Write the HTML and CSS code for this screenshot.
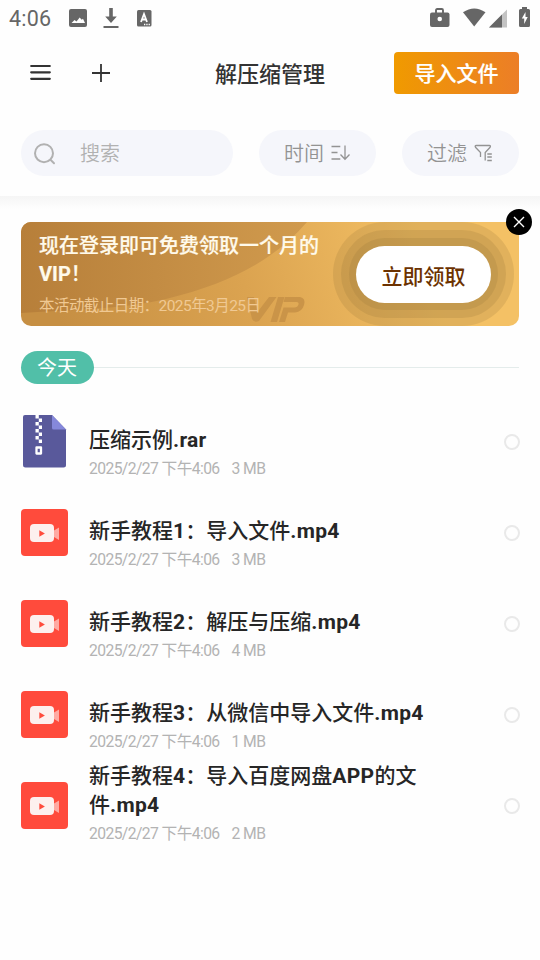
FILE: index.html
```html
<!DOCTYPE html>
<html lang="zh-CN">
<head>
<meta charset="utf-8">
<title>解压缩管理</title>
<link rel="stylesheet" href="styles.css">
</head>
<body>
<svg width="0" height="0" class="defs">
  <symbol id="video" viewBox="0 0 47 47">
    <rect width="47" height="47" rx="4" fill="#ff4b3c"/>
    <path d="M33 21.500l5-3v12.500l-5-3z" fill="#ffa9a2"/>
    <rect x="9" y="15" width="24" height="18" rx="4" fill="#fdf0ee"/>
    <path d="M18.300 21.200v6.600l5.600-3.300z" fill="#ff4b3c"/>
  </symbol>
</svg>
<div class="status">
  <span class="clock">4:06</span>
  <svg class="s-pic" width="18" height="18" viewBox="0 0 18 18"><rect width="18" height="18" rx="2" fill="#666"/><path d="M2.500 14l3-3 2 1.500 3.200-4 2 2.200 1.300-1 2 4.300z" fill="#fff"/></svg>
  <svg class="s-down" width="16" height="22" viewBox="0 0 16 22"><path d="M6.200 1h3.600v8.500h4L8 16 2.200 9.500h4zM.5 19h15v2H.5z" fill="#666"/></svg>
  <svg class="s-app" width="16" height="17" viewBox="0 0 16 17"><rect x="1" width="14.500" height="16.500" rx="1.500" fill="#666"/><path d="M5 12l3-8 3 8M6 9.500h4" fill="none" stroke="#fff" stroke-width="1.800"/><path d="M8 14.500h6" stroke="#fff" stroke-width="1.300" stroke-dasharray="1.300 1"/></svg>
  <span class="spacer"></span>
  <svg class="s-case" width="20" height="20" viewBox="0 0 20 20"><path d="M6 5V2.200Q6 1 7.200 1h4.600Q13 1 13 2.200V5" fill="none" stroke="#666" stroke-width="1.900"/><rect y="4.500" width="19.500" height="14.500" rx="2" fill="#666"/><circle cx="9.750" cy="11" r="2.300" fill="#fff"/></svg>
  <svg class="s-wifi" width="23" height="19" viewBox="0 0 23 19"><path d="M0 4.300Q11.200-3.500 22.500 4.300L11.200 18.500z" fill="#666"/></svg>
  <svg class="s-cell" width="18" height="19" viewBox="0 0 18 19"><path d="M0 18.500L18 .5v18z" fill="#c3c3c3"/><path d="M0 18.500L13 5.500v13z" fill="#666"/></svg>
  <svg class="s-batt" width="11" height="20" viewBox="0 0 11 20"><path d="M3 0h5v2h1.500q1.500 0 1.500 1.500v15q0 1.500-1.500 1.500h-8Q0 20 0 18.500v-15Q0 2 1.500 2H3z" fill="#666"/><path d="M6.500 5L2.800 11.500h2.400V17l3.500-7H6.500z" fill="#fff"/></svg>
</div>
<header class="bar">
  <svg class="menu" width="21" height="17" viewBox="0 0 21 17"><path d="M1.200 2h18.600M1.200 8.300h18.600M1.200 14.800h18.600" stroke="#333" stroke-width="2.200" stroke-linecap="round"/></svg>
  <svg class="plus" width="18" height="18" viewBox="0 0 18 18"><path d="M0 9h18M9 0v18" stroke="#333" stroke-width="1.800"/></svg>
  <h1>解压缩管理</h1>
  <button class="import">导入文件</button>
</header>
<div class="filters">
  <div class="pill search">
    <svg width="23" height="23" viewBox="0 0 23 23" fill="none" stroke="#b1b1b1" stroke-width="2" stroke-linecap="round"><circle cx="11" cy="11.200" r="9"/><path d="M18 18.200l3 3"/></svg>
    <span>搜索</span>
  </div>
  <div class="pill">
    <span>时间</span>
    <svg width="20" height="18" viewBox="0 0 20 18" fill="none" stroke="#939393" stroke-width="1.300"><path d="M.5 2.500h8.800M.5 8.500h6M.5 15h8.800M14 1.500V15M9.500 10.500L14 15.300l4.500-4.800"/></svg>
  </div>
  <div class="pill">
    <span>过滤</span>
    <svg width="20" height="18" viewBox="0 0 20 18" fill="none" stroke="#939393" stroke-width="1.300"><path d="M6.500 13V8.500L1.500 3.300q-1-1.800.8-1.800h13q1.800 0 .8 1.800L11.200 8.500V16.500M13.300 10h4.500M13.300 13h4.500M13.300 16.500h4.500"/></svg>
  </div>
</div>
<main>
  <section class="banner">
    <svg class="art" width="498" height="104" viewBox="0 0 498 104">
      <defs>
        <linearGradient id="gold" gradientUnits="userSpaceOnUse" x1="40" y1="104" x2="400" y2="0"><stop offset="0" stop-color="#c68f43"/><stop offset=".5" stop-color="#dba350"/><stop offset="1" stop-color="#f4c165"/></linearGradient>
        <linearGradient id="hill" gradientUnits="userSpaceOnUse" x1="0" y1="0" x2="280" y2="0"><stop offset="0" stop-color="#b77f3a"/><stop offset="1" stop-color="#d09a4d"/></linearGradient>
      </defs>
      <rect width="498" height="104" fill="url(#gold)"/>
      <path d="M0 0h286C253 38 210 61 145 77 96 88 45 88 0 91z" fill="url(#hill)"/>
      <g fill="#ca9448"><path d="M226 75h7l3.500 15L248 75h7.500L238 99q-5 2-7-2z"/><path d="M257 75h6.500l-7.500 25h-6.500z"/><path d="M264 75h15q6 1 4 8-2 7-9 7.500h-7L264 100h-6l4.500-14.500h11q3 0 4-3 .5-2.500-2-2.500h-13z"/></g>
      <g fill="#8e7037" fill-opacity=".19"><rect x="312" y="0" width="181" height="104" rx="52"/><rect x="320" y="8" width="165" height="88" rx="44"/><rect x="328" y="16" width="149" height="72" rx="36"/></g>
    </svg>
    <div class="offer">
      <h2>现在登录即可免费领取一个月的<b>VIP</b>！</h2>
      <p>本活动截止日期：2025年3月25日</p>
    </div>
    <button class="claim">立即领取</button>
    <svg class="close" width="26" height="26" viewBox="0 0 26 26"><circle cx="13" cy="13" r="13"/><path d="M8 8l10 10M18 8L8 18" stroke="#fff" stroke-width="1.400"/></svg>
  </section>
  <div class="day"><span>今天</span></div>
  <ul class="files">
    <li>
      <svg width="47" height="53" viewBox="0 0 47 53"><path d="M4 0h27l14 14.500V50q0 2.500-2.500 2.500H4.500Q2 52.500 2 50V2q0-2 2-2z" fill="#59599b"/><path d="M31 0l14 14.500H32.500Q31 14.500 31 13z" fill="#8588db"/><path d="M14.500 0h3.300v3.500h-3.300zM17.800 3.500H21V7h-3.200zM14.500 7h3.300v3.500h-3.300zM17.800 10.500H21V14h-3.200zM14.500 14h3.300v3.500h-3.300zM17.800 17.500H21V21h-3.200zM14.500 21h3.300v3.500h-3.300zM17.800 24.500H21V28h-3.200z" fill="#fff"/><rect x="15.500" y="32.500" width="4.500" height="6" fill="none" stroke="#fff" stroke-width="2.300" stroke-linejoin="round"/></svg>
      <div class="info"><h3>压缩示例<b>.rar</b></h3><p><span>2025/2/27 下午4:06</span><span>3 MB</span></p></div><i></i>
    </li>
    <li><svg width="47" height="47"><use href="#video"/></svg><div class="info"><h3>新手教程<b>1</b>：导入文件<b>.mp4</b></h3><p><span>2025/2/27 下午4:06</span><span>3 MB</span></p></div><i></i></li>
    <li><svg width="47" height="47"><use href="#video"/></svg><div class="info"><h3>新手教程<b>2</b>：解压与压缩<b>.mp4</b></h3><p><span>2025/2/27 下午4:06</span><span>4 MB</span></p></div><i></i></li>
    <li><svg width="47" height="47"><use href="#video"/></svg><div class="info"><h3>新手教程<b>3</b>：从微信中导入文件<b>.mp4</b></h3><p><span>2025/2/27 下午4:06</span><span>1 MB</span></p></div><i></i></li>
    <li><svg width="47" height="47"><use href="#video"/></svg><div class="info tall"><h3>新手教程<b>4</b>：导入百度网盘<b>APP</b>的文件<b>.mp4</b></h3><p><span>2025/2/27 下午4:06</span><span>2 MB</span></p></div><i></i></li>
  </ul>
</main>
</body>
</html>
```
FILE: styles.css
```css
* { box-sizing: border-box; margin: 0; padding: 0; }
body {
  width: 540px; height: 960px; overflow: hidden; background: #fefefe;
  font-family: Roboto, "Noto Sans CJK SC", sans-serif; color: #262626;
}
svg { display: block; flex: none; }
.defs { position: absolute; }
button { border: 0; font-family: inherit; }
.status { display: flex; align-items: center; height: 36px; padding: 0 10px 0 9px; }
.clock { width: 60px; margin-top: 1px; font-size: 21.500px; color: #666; letter-spacing: .2px; }
.s-down { margin-left: 16px; }
.s-app { margin-left: 17px; }
.spacer { flex: 1; }
.s-wifi { margin: -1px 3px 0 13px; }
.s-cell { margin-right: 12px; }
.s-batt { margin-top: -2px; }
.bar { display: flex; align-items: center; height: 74px; padding: 0 21px 0 30px; }
.menu { margin-top: -1px; }
.plus { margin: -1px 0 0 40.500px; }
.bar h1 { flex: 1; margin: 3px 0 0 105.500px; font-size: 22px; font-weight: 500; color: #333; line-height: 32px; }
.import {
  width: 125px; height: 42px; padding-bottom: 2px; border-radius: 4px; color: #fff;
  background: linear-gradient(90deg, #f09a00, #ec7e27); font-size: 21px; font-weight: 500;
  -webkit-text-stroke: .2px #fff;
}
.filters { display: flex; gap: 26px; height: 86px; padding: 20px 21px; }
.pill {
  display: flex; align-items: center; justify-content: center; gap: 7px;
  width: 117px; height: 46px; border-radius: 23px; background: #f5f6fb;
  color: #939393; font-size: 20px; font-weight: 350;
}
.pill span { margin-top: -1px; }
.search { width: 212px; justify-content: flex-start; gap: 24px; padding-left: 12px; color: #b1b1b1; }
main { height: 764px; padding: 26px 21px 0; background: linear-gradient(#f5f5f5, #fefefe 13px); }
.banner { position: relative; display: flex; justify-content: space-between; height: 104px; padding: 10px 28px 0 18px; }
.art { position: absolute; inset: 0; border-radius: 10px; }
.offer { position: relative; width: 290px; color: #fffaeb; }
.offer h2 { font-size: 20px; font-weight: 500; line-height: 28px; -webkit-text-stroke: .2px #fffaeb; }
.offer p { margin-top: 7px; font-size: 15.500px; line-height: 22px; color: #f0c993; letter-spacing: -.56px; white-space: nowrap; }
.claim { position: relative; width: 135px; height: 57px; margin-top: 14px; border-radius: 29px; background: #fff; color: #6c3200; font-size: 21px; font-weight: 500; }
.close { position: absolute; right: -13px; top: -13px; }
.day { display: flex; align-items: center; height: 33px; margin-top: 25px; }
.day span { width: 73px; padding-top: 1px; line-height: 32px; border-radius: 17px; background: #51bfa8; color: #fff; font-size: 20px; text-align: center; text-indent: -1px; }
.day::after { content: ""; flex: 1; height: 1px; background: #e4eceb; }
.files { list-style: none; margin-top: 12px; }
.files li { display: flex; align-items: center; height: 91px; }
.info { align-self: flex-end; width: 350px; margin-left: 21px; padding-bottom: 9px; }
.tall { padding-bottom: 8px; }
.info h3 { font-size: 21px; font-weight: 500; line-height: 29px; }
.info h3 b { letter-spacing: .3px; }
.info p { display: flex; gap: 12px; margin-top: 4px; font-size: 15.700px; line-height: 19px; color: #b3b3b3; letter-spacing: -.6px; }
.files i { width: 16px; height: 16px; margin: 1px -1px 0 auto; border: 2px solid #e9e9e9; border-radius: 50%; }
```
